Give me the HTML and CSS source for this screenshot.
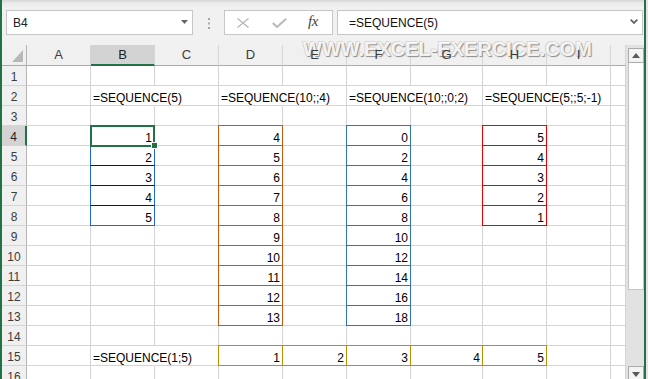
FILE: index.html
```html
<!DOCTYPE html>
<html>
<head>
<meta charset="utf-8">
<link rel="stylesheet" href="styles.css">
</head>
<body>
<div class="app">
  <div class="toolbar">
    <div class="namebox"><span>B4</span>
      <svg class="ddarrow" width="7" height="4" viewBox="0 0 7 4"><polygon points="0,0 7,0 3.5,4" fill="#666"/></svg>
    </div>
    <svg class="dots" width="2" height="11" viewBox="0 0 2 11"><rect x="0" y="0" width="2" height="2" fill="#a8a8a8"/><rect x="0" y="4.5" width="2" height="2" fill="#a8a8a8"/><rect x="0" y="9" width="2" height="2" fill="#a8a8a8"/></svg>
    <div class="fbox">
      <svg class="ico-x" width="12" height="10" viewBox="0 0 12 10"><path d="M0.5 0.5 L11.5 9.5 M11.5 0.5 L0.5 9.5" stroke="#b9b9b9" stroke-width="1.4" fill="none"/></svg>
      <svg class="ico-ok" width="15" height="10" viewBox="0 0 15 10"><path d="M0.8 5 L5 9 L14.2 0.8" stroke="#b9b9b9" stroke-width="2" fill="none"/></svg>
      <span class="fx">fx</span>
    </div>
    <div class="formula"><span>=SEQUENCE(5)</span>
      <svg class="chev" width="8" height="5" viewBox="0 0 8 5"><path d="M0.7 0.7 L4 4 L7.3 0.7" stroke="#666" stroke-width="1.8" fill="none"/></svg>
    </div>
  </div>
  <div class="main">
    <div class="sheet">
      <div class="c h corner"><svg width="23" height="20" viewBox="0 0 23 20"><polygon points="10,17 21,17 21,5" fill="#b8b8b8"/></svg></div>
      <div class="c h"><span>A</span></div><div class="c h hs"><span>B</span></div><div class="c h"><span>C</span></div><div class="c h"><span>D</span></div><div class="c h"><span>E</span></div><div class="c h"><span>F</span></div><div class="c h"><span>G</span></div><div class="c h"><span>H</span></div><div class="c h"><span>I</span></div><div class="c h"></div>

      <div class="c rh">1</div><div class="c"></div><div class="c"></div><div class="c"></div><div class="c"></div><div class="c"></div><div class="c"></div><div class="c"></div><div class="c"></div><div class="c"></div><div class="c"></div>

      <div class="c rh">2</div><div class="c"></div><div class="c ov">=SEQUENCE(5)</div><div class="c"></div><div class="c ov">=SEQUENCE(10;;4)</div><div class="c"></div><div class="c ov">=SEQUENCE(10;;0;2)</div><div class="c"></div><div class="c ov">=SEQUENCE(5;;5;-1)</div><div class="c"></div><div class="c"></div>

      <div class="c rh">3</div><div class="c"></div><div class="c"></div><div class="c"></div><div class="c"></div><div class="c"></div><div class="c"></div><div class="c"></div><div class="c"></div><div class="c"></div><div class="c"></div>

      <div class="c rh rs">4</div><div class="c"></div><div class="c n bq sel">1<span class="handle"></span></div><div class="c"></div><div class="c n o">4</div><div class="c"></div><div class="c n bl">0</div><div class="c"></div><div class="c n r">5</div><div class="c"></div><div class="c"></div>

      <div class="c rh">5</div><div class="c"></div><div class="c n bq">2</div><div class="c"></div><div class="c n o">5</div><div class="c"></div><div class="c n bl">2</div><div class="c"></div><div class="c n r">4</div><div class="c"></div><div class="c"></div>

      <div class="c rh">6</div><div class="c"></div><div class="c n bq">3</div><div class="c"></div><div class="c n o">6</div><div class="c"></div><div class="c n bl">4</div><div class="c"></div><div class="c n r">3</div><div class="c"></div><div class="c"></div>

      <div class="c rh">7</div><div class="c"></div><div class="c n bq">4</div><div class="c"></div><div class="c n o">7</div><div class="c"></div><div class="c n bl">6</div><div class="c"></div><div class="c n r">2</div><div class="c"></div><div class="c"></div>

      <div class="c rh">8</div><div class="c"></div><div class="c n bq bq-end">5</div><div class="c"></div><div class="c n o">8</div><div class="c"></div><div class="c n bl">8</div><div class="c"></div><div class="c n r">1</div><div class="c"></div><div class="c"></div>

      <div class="c rh">9</div><div class="c"></div><div class="c"></div><div class="c"></div><div class="c n o">9</div><div class="c"></div><div class="c n bl">10</div><div class="c"></div><div class="c"></div><div class="c"></div><div class="c"></div>

      <div class="c rh">10</div><div class="c"></div><div class="c"></div><div class="c"></div><div class="c n o">10</div><div class="c"></div><div class="c n bl">12</div><div class="c"></div><div class="c"></div><div class="c"></div><div class="c"></div>

      <div class="c rh">11</div><div class="c"></div><div class="c"></div><div class="c"></div><div class="c n o">11</div><div class="c"></div><div class="c n bl">14</div><div class="c"></div><div class="c"></div><div class="c"></div><div class="c"></div>

      <div class="c rh">12</div><div class="c"></div><div class="c"></div><div class="c"></div><div class="c n o">12</div><div class="c"></div><div class="c n bl">16</div><div class="c"></div><div class="c"></div><div class="c"></div><div class="c"></div>

      <div class="c rh">13</div><div class="c"></div><div class="c"></div><div class="c"></div><div class="c n o">13</div><div class="c"></div><div class="c n bl">18</div><div class="c"></div><div class="c"></div><div class="c"></div><div class="c"></div>

      <div class="c rh">14</div><div class="c"></div><div class="c"></div><div class="c"></div><div class="c"></div><div class="c"></div><div class="c"></div><div class="c"></div><div class="c"></div><div class="c"></div><div class="c"></div>

      <div class="c rh">15</div><div class="c"></div><div class="c ov">=SEQUENCE(1;5)</div><div class="c"></div><div class="c n g">1</div><div class="c n g">2</div><div class="c n g">3</div><div class="c n g">4</div><div class="c n g">5</div><div class="c"></div><div class="c"></div>

      <div class="c rh">16</div><div class="c"></div><div class="c"></div><div class="c"></div><div class="c"></div><div class="c"></div><div class="c"></div><div class="c"></div><div class="c"></div><div class="c"></div><div class="c"></div>
    </div>
    <div class="vscroll">
      <div class="sbtn"><svg width="8" height="5" viewBox="0 0 8 5"><polygon points="0,5 8,5 4,0" fill="#5a5a5a"/></svg></div>
      <div class="thumb"></div>
      <div class="sbtn down"><svg width="8" height="5" viewBox="0 0 8 5"><polygon points="0,0 8,0 4,5" fill="#5a5a5a"/></svg></div>
    </div>
  </div>
  <div class="watermark">WWW.EXCEL-EXERCICE.COM</div>
</div>
</body>
</html>
```
FILE: styles.css
```css
html, body {
  margin: 0;
  padding: 0;
}
body {
  background: #e4e4e4;
  font-family: "Liberation Sans", Arial, sans-serif;
  width: 648px;
  height: 379px;
  overflow: hidden;
}
.app {
  width: 646px;
  height: 379px;
  box-sizing: border-box;
  border-left: 2px solid #217346;
  border-right: 2px solid #217346;
  position: relative;
  overflow: hidden;
  background: #f0f0f0;
}
.toolbar {
  height: 45px;
  box-sizing: border-box;
  padding: 10px 0 0 4px;
  display: flex;
  align-items: flex-start;
  background: linear-gradient(#d6d6d6 0, #ebebeb 3px, #f1f1f1 8px, #f1f1f1 100%);
}
.namebox {
  width: 187px;
  height: 25px;
  box-sizing: border-box;
  border: 1px solid #c6c6c6;
  background: #fff;
  display: flex;
  align-items: center;
  justify-content: space-between;
  padding: 0 4px 0 6px;
  font-size: 12px;
  color: #222;
}
.ddarrow {
  margin-top: -2px;
}
.dots {
  margin: 8px 0 0 15px;
  flex-shrink: 0;
}
.fbox {
  margin-left: 14px;
  width: 109px;
  height: 25px;
  box-sizing: border-box;
  border: 1px solid #c6c6c6;
  background: #fff;
  display: flex;
  align-items: center;
  padding-left: 12px;
}
.ico-x {
  flex-shrink: 0;
}
.ico-ok {
  margin-left: 23px;
  flex-shrink: 0;
}
.fx {
  margin-left: 21px;
  font-family: "Liberation Serif", "Times New Roman", serif;
  font-style: italic;
  font-size: 15px;
  color: #444;
  letter-spacing: -0.5px;
  margin-top: -2px;
}
.formula {
  margin-left: 4px;
  width: 306px;
  height: 25px;
  box-sizing: border-box;
  border: 1px solid #c6c6c6;
  background: #fff;
  display: flex;
  align-items: center;
  justify-content: space-between;
  padding: 0 4px 0 11px;
  font-size: 12px;
  color: #111;
}
.chev {
  margin-top: -3px;
}
.main {
  display: flex;
  height: 334px;
}
.sheet {
  display: grid;
  grid-template-columns: 25px 64px 64px 64px 64px 64px 64px 72px 64px 64px 15px;
  grid-template-rows: 21px repeat(16, 20px);
  width: 624px;
  height: 334px;
  background: #fff;
  position: relative;
  overflow: hidden;
}
.c {
  box-sizing: border-box;
  border-right: 1px solid #d4d4d4;
  border-bottom: 1px solid #d4d4d4;
  font-size: 12px;
  line-height: 16px;
  padding: 4px 2px 0 2px;
  white-space: nowrap;
  position: relative;
  color: #000;
}
.n {
  text-align: right;
}
.ov {
  border-right-color: #fff;
}
.h {
  background: #f0f0f0;
  border-right-color: #d5d5d5;
  border-bottom-color: #ababab;
  text-align: center;
  font-size: 13px;
  line-height: 20px;
  padding: 0;
  color: #3c3c3c;
}
.h span {
  position: relative;
  z-index: 6;
}
.hs {
  background: #d3d3d3;
  border-bottom: 2px solid #217346;
  color: #222;
}
.corner {
  border-right-color: #b5b5b5;
}
.corner svg {
  display: block;
}
.rh {
  background: #f0f0f0;
  border-right-color: #b5b5b5;
  border-bottom-color: #d5d5d5;
  text-align: center;
  padding: 3px 0 0;
  color: #3c3c3c;
}
.rs {
  background: #d3d3d3;
  border-right: 2px solid #217346;
  color: #222;
}
.o::before, .bl::before, .r::before, .g::before, .bq::before, .sel::after {
  content: "";
  position: absolute;
  top: -1px;
  left: -1px;
  right: -1px;
  bottom: -1px;
  border: 1px solid;
  pointer-events: none;
  z-index: 1;
}
.o::before { border-color: #c65911; }
.bl::before { border-color: #2e75b6; }
.r::before { border-color: #f00000; }
.g::before { border-color: #bf8f00; }
.bq::before {
  border-color: #1a1a1a #2266d0;
  border-top-width: 0;
  top: 0;
}
.bq-end::before {
  border-bottom-color: #2266d0;
}
.sel::after {
  bottom: -2px;
  border: 2px solid #217346;
  z-index: 2;
}
.handle {
  position: absolute;
  left: 60px;
  top: 16px;
  width: 5px;
  height: 5px;
  background: #217346;
  border: 1px solid #fff;
  z-index: 3;
}
.vscroll {
  width: 18px;
  height: 334px;
  box-sizing: border-box;
  padding: 3px 0 0 2px;
  background: #e2e2e2;
  display: flex;
  flex-direction: column;
  overflow: hidden;
}
.sbtn {
  width: 16px;
  height: 15px;
  flex-shrink: 0;
  box-sizing: border-box;
  border: 1px solid #ababab;
  background: #f3f3f3;
  display: flex;
  align-items: center;
  justify-content: center;
}
.thumb {
  width: 16px;
  height: 227px;
  flex-shrink: 0;
  box-sizing: border-box;
  border: 1px solid #c4c4c4;
  border-top: 0;
  background: #fff;
}
.down {
  margin-top: 76px;
  align-items: flex-start;
  padding-top: 5px;
}
.watermark {
  position: absolute;
  left: 301px;
  top: 39px;
  font-size: 20px;
  line-height: 20px;
  font-weight: bold;
  color: rgba(255, 255, 255, 0.9);
  text-shadow: 1px 1px 1px #8c8c8c, -1px -1px 0 #d8d8d8, 0 0 1px #9a9a9a;
  white-space: nowrap;
  z-index: 5;
  pointer-events: none;
}
```
